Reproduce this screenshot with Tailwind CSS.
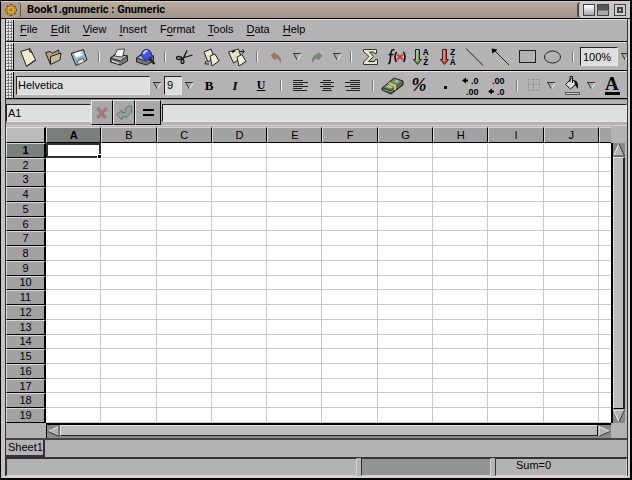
<!DOCTYPE html>
<html lang="en" class="h-full">
  <head>
    <meta charset="UTF-8" />
    <meta name="viewport" content="width=device-width, initial-scale=1.0" />
    <title>Book1.gnumeric : Gnumeric</title>
    <script src="https://cdn.jsdelivr.net/npm/@tailwindcss/browser@4"></script>
  </head>
  <body class="h-full bg-black font-['Liberation_Sans',sans-serif] text-[11px] leading-none text-black">
    <div class="flex h-full flex-col overflow-hidden border border-r-2 border-black border-b-2 bg-[#b4b2b5]">
      <!-- title bar -->
      <header class="flex h-[18px] shrink-0 border-t border-b border-t-[#d8d0c8] border-b-black bg-linear-to-b from-[#b9ada1] to-[#a0948a]">
        <button aria-label="Window menu" class="flex w-5 items-center justify-center rounded-r-sm border-r border-[#5c544c] bg-[#a89c90]">
          <svg class="size-3" viewBox="0 0 12 12" fill="none">
            <path d="M6 0v12M0 6h12M1.800 1.800l8.400 8.400M1.800 10.200l8.400-8.400" stroke="#6b4a10" stroke-width="2.400" />
            <path d="M6 1v10M1 6h10M2.500 2.500l7 7M2.500 9.500l7-7" stroke="#f3a81c" stroke-width="1.400" />
            <circle cx="6" cy="6" r="2.500" fill="#8a7a68" stroke="#f3a81c" stroke-width="1.400" />
          </svg>
        </button>
        <h1 class="flex-1 pt-[2px] pl-[6px] font-['Roboto',sans-serif] text-[11px] font-bold">Book1.gnumeric : Gnumeric</h1>
        <div class="flex items-center rounded-l-sm border-l-2 border-[#4c4844] bg-[#c9c6c8] pr-1 pl-1">
          <button aria-label="Minimize" class="size-3 border border-[#444] bg-linear-to-b from-white from-10% to-[#a8a6a8]"></button>
          <button aria-label="Maximize" class="ml-[2px] size-3 border border-[#444] bg-linear-to-b from-[#555] from-50% to-[#aaa] to-60%"></button>
          <button aria-label="Close" class="ml-[5px] flex size-3 items-center justify-center border border-[#444] bg-[#d0ced0]">
            <span class="size-[6px] border-2 border-[#444] bg-[#ccc]"></span>
          </button>
        </div>
      </header>

      <div class="flex min-h-0 flex-1 flex-col border-2 border-t-0 border-l-4 border-[#d4d2d4] border-l-[#c4c2c4]">
        <div class="flex min-h-0 flex-1 flex-col border-r border-l border-[#333]">
          <!-- menu bar -->
          <nav class="flex h-[23px] shrink-0 border-t border-b border-t-[#e6e4e6] border-b-black">
            <span class="w-[8px] border-r border-r-black bg-[radial-gradient(circle_at_1px_1px,#e6e4e6_1px,transparent_1px),radial-gradient(circle_at_2px_2px,#6c6a6d_1px,#b4b2b5_1px)] bg-size-[3px_3px]"></span>
            <div class="flex items-center gap-[13px] pb-[2px] pl-[6px]">
              <button><u class="underline-offset-2">F</u>ile</button>
              <button><u class="underline-offset-2">E</u>dit</button>
              <button><u class="underline-offset-2">V</u>iew</button>
              <button><u class="underline-offset-2">I</u>nsert</button>
              <button>F<u class="underline-offset-2">o</u>rmat</button>
              <button><u class="underline-offset-2">T</u>ools</button>
              <button><u class="underline-offset-2">D</u>ata</button>
              <button><u class="underline-offset-2">H</u>elp</button>
            </div>
          </nav>

          <!-- standard toolbar -->
          <div class="flex h-[29px] shrink-0 items-center overflow-hidden border-t border-b border-t-[#e6e4e6] border-b-black">
            <span class="h-full w-[8px] shrink-0 border-r border-r-black bg-[radial-gradient(circle_at_1px_1px,#e6e4e6_1px,transparent_1px),radial-gradient(circle_at_2px_2px,#6c6a6d_1px,#b4b2b5_1px)] bg-size-[3px_3px]"></span>
            <button aria-label="New" class="w-[26px] shrink-0">
              <svg class="size-[26px]" viewBox="0 0 26 26">
                <path d="M6.700 7.500 16 4.700l5.500 11-9 6.500z" fill="#eeebd0" stroke="#222" />
                <path d="M12.500 22.500l9.500-6.500M16 4.700l-.5 3 3 1" fill="none" stroke="#222" />
              </svg>
            </button>
            <button aria-label="Open" class="w-[26px] shrink-0">
              <svg class="size-[26px]" viewBox="0 0 26 26" stroke="#222">
                <path d="M5.500 8.500l5-1 1.500 2 6.500-3.500 1 5-9 3.500-.5 5z" fill="#b0a480" />
                <path d="M10.500 12.500l10.500-3.500-1 7-9.500 4.500z" fill="#c8bb98" />
              </svg>
            </button>
            <button aria-label="Save" class="w-[26px] shrink-0">
              <svg class="size-[26px]" viewBox="0 0 26 26" stroke="#222">
                <path d="M5 9.500l12.500-4 3.500 10.500-11 5.500z" fill="#8fb4c4" />
                <path d="M8 9.500l7-2.500 2 4-7 3z" fill="#fff" stroke="none" />
                <path d="M11.500 17l5.500-2.500 1.500 3-6 3z" fill="#dde8ee" stroke-width=".6" />
              </svg>
            </button>
            <span class="flex w-[14px] shrink-0 justify-center"><i class="h-[11px] w-[2px] border-l border-[#777] bg-[#eee]"></i></span>
            <button aria-label="Print" class="w-[26px] shrink-0">
              <svg class="size-[26px]" viewBox="0 0 26 26" stroke="#222">
                <path d="M4.500 14l5-4 12 2v5l-7 4-10-3z" fill="#77787a" />
                <path d="M4.500 14l10 3 7-5-11-2z" fill="#b9b9bb" />
                <path d="M8.500 12l3-6.500 7-.5-2 8z" fill="#fafafa" stroke-width=".8" />
                <path d="M6 17l7 2.500" stroke="#fff" />
              </svg>
            </button>
            <button aria-label="Print preview" class="w-[26px] shrink-0">
              <svg class="size-[26px]" viewBox="0 0 26 26" stroke="#222">
                <path d="M4.500 14l5-4 12 2v5l-7 4-10-3z" fill="#77787a" />
                <path d="M4.500 14l10 3 7-5-11-2z" fill="#b9b9bb" />
                <path d="M17 14l5.500 6" stroke-width="2.500" />
                <circle cx="14.500" cy="10.500" r="5" fill="#3f55e8" stroke="#1a2390" />
                <path d="M11.500 10q1-3 4-3" fill="none" stroke="#c8d4ff" stroke-width="1.800" />
              </svg>
            </button>
            <span class="flex w-[14px] shrink-0 justify-center"><i class="h-[11px] w-[2px] border-l border-[#777] bg-[#eee]"></i></span>
            <button aria-label="Cut" class="w-[26px] shrink-0">
              <svg class="size-[26px]" viewBox="0 0 26 26" fill="none" stroke="#111" stroke-width="1.300">
                <path d="M15 6.500L11 15M20.500 11L9 14.500" />
                <ellipse cx="7" cy="14" rx="2.500" ry="1.500" />
                <ellipse cx="10.500" cy="17.500" rx="1.500" ry="2" />
              </svg>
            </button>
            <button aria-label="Copy" class="w-[26px] shrink-0">
              <svg class="size-[26px]" viewBox="0 0 26 26" fill="#eeebd0" stroke="#222">
                <path d="M6 8l7-3 3 8-6 5z" />
                <path d="M12 12l5-2 4 7-7 5z" />
                <path d="M8 17l-1 3 4 0" fill="none" />
              </svg>
            </button>
            <button aria-label="Paste" class="w-[26px] shrink-0">
              <svg class="size-[26px]" viewBox="0 0 26 26" fill="#e6e2c6" stroke="#222">
                <path d="M4.500 8l10-3 3 9-8 5z" />
                <path d="M13 13l5-2.500 4 7-7 4.500z" fill="#f4f1da" />
                <path d="M8 8l3-1.500" stroke-width="2" />
                <path d="M15 7.500h5M18 5.500l2.500 2-2.500 2" fill="none" />
              </svg>
            </button>
            <span class="flex w-[14px] shrink-0 justify-center"><i class="h-[11px] w-[2px] border-l border-[#777] bg-[#eee]"></i></span>
            <button aria-label="Undo" class="w-[26px] shrink-0">
              <svg class="size-[26px]" viewBox="0 0 26 26">
                <path d="M7 11.500l4-3v2q6 0 5.500 8-1-4.500-5.500-4.500v2z" fill="#a5765f" stroke="#7d6a64" stroke-width=".6" />
              </svg>
            </button>
            <button aria-label="Undo history" class="flex w-[14px] shrink-0 justify-center">
              <svg class="size-[9px]" viewBox="0 0 9 9"><path d="M.5 1h8L4.500 8.500z" fill="#aaa" /><path d="M0 1.500h8.500M.8 1.500l3.700 7" stroke="#333" fill="none" /><path d="M4.500 8.500l3.700-7" stroke="#eee" /></svg>
            </button>
            <button aria-label="Redo" class="w-[26px] shrink-0">
              <svg class="size-[26px]" viewBox="0 0 26 26">
                <path d="M18 11.500l-4-3v2q-6 0-5.500 8 1-4.500 5.500-4.500v2z" fill="#728a72" stroke="#65756a" stroke-width=".6" />
              </svg>
            </button>
            <button aria-label="Redo history" class="flex w-[14px] shrink-0 justify-center">
              <svg class="size-[9px]" viewBox="0 0 9 9"><path d="M.5 1h8L4.500 8.500z" fill="#aaa" /><path d="M0 1.500h8.500M.8 1.500l3.700 7" stroke="#333" fill="none" /><path d="M4.500 8.500l3.700-7" stroke="#eee" /></svg>
            </button>
            <span class="flex w-[14px] shrink-0 justify-center"><i class="h-[11px] w-[2px] border-l border-[#777] bg-[#eee]"></i></span>
            <button aria-label="Sum" class="w-[26px] shrink-0">
              <svg class="size-[26px]" viewBox="0 0 26 26">
                <path d="M5.500 5.500h13v4h-2l-1-1.500h-4l4 4.500-5 5h6l1-2h2v5h-14v-2.500l5.500-5.500-5.500-5z" fill="#e9e5c8" stroke="#333" />
              </svg>
            </button>
            <button aria-label="Function" class="w-[26px] shrink-0">
              <svg class="size-[26px]" viewBox="0 0 26 26" fill="none" stroke="#111">
                <path d="M10.500 6q-3-1-3.500 2.500l-1 9q-.5 2.500-2 2M4.500 10.500h5" stroke-width="1.600" />
                <path d="M12.500 8q-3 5 0 10M19.500 8q3 5 0 10" stroke-width="1.600" />
                <path d="M13.500 10.500l5 5M18.500 10.500l-5 5" stroke="#d0342a" stroke-width="1.800" />
              </svg>
            </button>
            <button aria-label="Sort ascending" class="w-[26px] shrink-0">
              <svg class="size-[26px]" viewBox="0 0 26 26">
                <path d="M5.500 5.500h4v10h2l-4 5-4-5h2z" fill="#6e9a58" stroke="#222" />
                <path d="M7 6v11" stroke="#dfeccf" />
                <text x="13" y="11" class="font-['Liberation_Mono'] text-[9px] font-bold">A</text>
                <text x="13" y="21" class="font-['Liberation_Mono'] text-[9px] font-bold">Z</text>
                <path d="M15 13h2" stroke="#000" />
              </svg>
            </button>
            <button aria-label="Sort descending" class="w-[26px] shrink-0">
              <svg class="size-[26px]" viewBox="0 0 26 26">
                <path d="M6.500 5.500h4v10h2l-4 5-4-5h2z" fill="#d8453a" stroke="#222" />
                <path d="M8 6v11" stroke="#f8c8c0" />
                <text x="14" y="11" class="font-['Liberation_Mono'] text-[9px] font-bold">Z</text>
                <text x="14" y="21" class="font-['Liberation_Mono'] text-[9px] font-bold">A</text>
                <path d="M16 13h2" stroke="#000" />
              </svg>
            </button>
            <button aria-label="Line" class="w-[26px] shrink-0">
              <svg class="size-[26px]" viewBox="0 0 26 26"><path d="M4 4.500l17 17" stroke="#222" /></svg>
            </button>
            <button aria-label="Arrow" class="w-[26px] shrink-0">
              <svg class="size-[26px]" viewBox="0 0 26 26"><path d="M5 5l16 16" stroke="#222" /><path d="M3.500 4.500l6 1-5 4z" /></svg>
            </button>
            <button aria-label="Rectangle" class="w-[26px] shrink-0">
              <svg class="size-[26px]" viewBox="0 0 26 26"><rect x="5.500" y="6.500" width="16" height="12" fill="none" stroke="#222" /></svg>
            </button>
            <button aria-label="Ellipse" class="w-[26px] shrink-0">
              <svg class="size-[26px]" viewBox="0 0 26 26"><ellipse cx="12.500" cy="13" rx="8" ry="6" fill="none" stroke="#222" /></svg>
            </button>
            <span class="flex w-[14px] shrink-0 justify-center"><i class="h-[11px] w-[2px] border-l border-[#777] bg-[#eee]"></i></span>
            <input aria-label="Zoom" value="100%" class="h-[19px] w-[38px] shrink-0 border border-[#e8e6e8] border-t-[#222] border-l-[#222] bg-[#dedede] pl-[2px]" />
            <button aria-label="Zoom levels" class="flex w-[14px] shrink-0 justify-center">
              <svg class="size-[9px]" viewBox="0 0 9 9"><path d="M.5 1h8L4.500 8.500z" fill="#aaa" /><path d="M0 1.500h8.500M.8 1.500l3.700 7" stroke="#333" fill="none" /><path d="M4.500 8.500l3.700-7" stroke="#eee" /></svg>
            </button>
          </div>

          <!-- format toolbar -->
          <div class="flex h-[28px] shrink-0 items-center overflow-hidden border-t border-b border-t-[#e6e4e6] border-b-black">
            <span class="h-full w-[8px] shrink-0 border-r border-r-black bg-[radial-gradient(circle_at_1px_1px,#e6e4e6_1px,transparent_1px),radial-gradient(circle_at_2px_2px,#6c6a6d_1px,#b4b2b5_1px)] bg-size-[3px_3px]"></span>
            <input aria-label="Font" value="Helvetica" class="ml-[2px] h-[19px] w-[134px] shrink-0 border border-[#e8e6e8] border-t-[#222] border-l-[#222] bg-[#dedede] pl-px" />
            <button aria-label="Choose font" class="flex w-[14px] shrink-0 justify-center">
              <svg class="size-[9px]" viewBox="0 0 9 9"><path d="M.5 1h8L4.500 8.500z" fill="#aaa" /><path d="M0 1.500h8.500M.8 1.500l3.700 7" stroke="#333" fill="none" /><path d="M4.500 8.500l3.700-7" stroke="#eee" /></svg>
            </button>
            <input aria-label="Font size" value="9" class="h-[19px] w-[18px] shrink-0 border border-[#e8e6e8] border-t-[#222] border-l-[#222] bg-[#dedede] pl-[2px]" />
            <button aria-label="Choose size" class="flex w-[14px] shrink-0 justify-center">
              <svg class="size-[9px]" viewBox="0 0 9 9"><path d="M.5 1h8L4.500 8.500z" fill="#aaa" /><path d="M0 1.500h8.500M.8 1.500l3.700 7" stroke="#333" fill="none" /><path d="M4.500 8.500l3.700-7" stroke="#eee" /></svg>
            </button>
            <button class="w-[26px] shrink-0 font-['Liberation_Serif',serif] text-[13px] font-bold">B</button>
            <button class="w-[26px] shrink-0 font-['Liberation_Serif',serif] text-[13px] font-bold italic">I</button>
            <button class="w-[26px] shrink-0 font-['Liberation_Serif',serif] text-[12px] font-bold underline">U</button>
            <span class="flex w-[14px] shrink-0 justify-center"><i class="h-[11px] w-[2px] border-l border-[#777] bg-[#eee]"></i></span>
            <button aria-label="Align left" class="w-[26px] shrink-0">
              <svg class="size-[26px]" viewBox="0 0 26 26" stroke="#222" stroke-width="1"><path d="M5 8.500h10M5 10.500h15M5 12.500h10M5 14.500h15M5 16.500h9M5 18.500h14" /></svg>
            </button>
            <button aria-label="Align center" class="w-[26px] shrink-0">
              <svg class="size-[26px]" viewBox="0 0 26 26" stroke="#222" stroke-width="1"><path d="M9 8.500h8M6 10.500h14M9 12.500h8M6 14.500h14M9 16.500h8M8 18.500h10" /></svg>
            </button>
            <button aria-label="Align right" class="w-[26px] shrink-0">
              <svg class="size-[26px]" viewBox="0 0 26 26" stroke="#222" stroke-width="1"><path d="M10 8.500h10M5 10.500h15M10 12.500h10M5 14.500h15M11 16.500h9M6 18.500h14" /></svg>
            </button>
            <span class="flex w-[14px] shrink-0 justify-center"><i class="h-[11px] w-[2px] border-l border-[#777] bg-[#eee]"></i></span>
            <button aria-label="Money" class="w-[26px] shrink-0">
              <svg class="size-[26px]" viewBox="0 0 26 26">
                <path d="M2 16L14 6l9 3v4L11 22l-9-4z" fill="#33452f" stroke="#1c241a" />
                <path d="M3 15.500L14.500 6.500l8 3L11 18z" fill="#6d8766" />
                <path d="M6 15q2-3 5-1t-1 2zM14 9.500q2-2 4-1t-1 2z" fill="#b7c7ac" />
                <path d="M3 17.500l8 2.500 11-8.500" stroke="#8fa688" fill="none" />
                <path d="M8.500 11l6.500 3v4" fill="none" stroke="#e8b85c" stroke-width="2" />
              </svg>
            </button>
            <button class="w-[26px] shrink-0 font-['Liberation_Serif',serif] text-[18px] font-bold italic">%</button>
            <button aria-label="Thousands separator" class="flex w-[26px] shrink-0 justify-center"><i class="mt-1 size-[3px] bg-black"></i></button>
            <button aria-label="Increase decimals" class="w-[26px] shrink-0">
              <svg class="size-[26px]" viewBox="0 0 26 26">
                <path d="M6 8.500h4" stroke="#000" stroke-width="2" /><path d="M4 8.500l4-3v6z" />
                <text x="13" y="12" class="font-['Liberation_Sans'] text-[9px] font-bold">.0</text>
                <text x="8" y="23" class="font-['Liberation_Sans'] text-[9px] font-bold">.00</text>
              </svg>
            </button>
            <button aria-label="Decrease decimals" class="w-[26px] shrink-0">
              <svg class="size-[26px]" viewBox="0 0 26 26">
                <text x="8" y="12" class="font-['Liberation_Sans'] text-[9px] font-bold">.00</text>
                <path d="M6 19.500h4" stroke="#000" stroke-width="2" /><path d="M4 19.500l4-3v6z" />
                <text x="13" y="23" class="font-['Liberation_Sans'] text-[9px] font-bold">.0</text>
              </svg>
            </button>
            <span class="flex w-[14px] shrink-0 justify-center"><i class="h-[11px] w-[2px] border-l border-[#777] bg-[#eee]"></i></span>
            <button aria-label="Borders" class="flex w-5 shrink-0 justify-center">
              <svg class="size-3" viewBox="0 0 12 12" fill="none" stroke="#8c8a8d" stroke-dasharray="1 1"><path d="M0 .5h12M0 5.500h12M0 11.500h12M.5 0v12M5.500 0v12M11.500 0v12" /></svg>
            </button>
            <button aria-label="Choose border" class="flex w-[14px] shrink-0 justify-center">
              <svg class="size-[9px]" viewBox="0 0 9 9"><path d="M.5 1h8L4.500 8.500z" fill="#aaa" /><path d="M0 1.500h8.500M.8 1.500l3.700 7" stroke="#333" fill="none" /><path d="M4.500 8.500l3.700-7" stroke="#eee" /></svg>
            </button>
            <button aria-label="Background" class="w-[26px] shrink-0">
              <svg class="size-[26px]" viewBox="0 0 26 26">
                <path d="M7.500 12.500l6-6 5 5-6 5.500z" fill="#ddd" stroke="#111" />
                <path d="M12 10V4.500h2.500V11" fill="none" stroke="#111" />
                <path d="M16 8q5 1 4 9l-3-4z" fill="#111" />
                <rect x="7.500" y="20.500" width="14" height="2" fill="#ccc" stroke="#555" />
              </svg>
            </button>
            <button aria-label="Choose background" class="flex w-[14px] shrink-0 justify-center">
              <svg class="size-[9px]" viewBox="0 0 9 9"><path d="M.5 1h8L4.500 8.500z" fill="#aaa" /><path d="M0 1.500h8.500M.8 1.500l3.700 7" stroke="#333" fill="none" /><path d="M4.500 8.500l3.700-7" stroke="#eee" /></svg>
            </button>
            <button aria-label="Text color" class="w-[26px] shrink-0">
              <svg class="size-[26px]" viewBox="0 0 26 26">
                <text x="7" y="18" class="font-['Liberation_Serif'] text-[19px] font-bold">A</text>
                <rect x="7" y="20" width="15" height="3" />
              </svg>
            </button>
          </div>

          <!-- cell name and formula -->
          <div class="mb-px flex h-[27px] shrink-0 border-t border-b border-t-[#888] border-b-[#d8d0d4]">
            <input aria-label="Cell" value="A1" class="mt-1 mb-[3px] w-[85px] border border-[#e8e6e8] border-t-[#222] border-l-[#222] bg-[#dedede] pl-px" />
            <button aria-label="Cancel" class="flex w-[22px] items-center justify-center border border-[#e6e4e6] border-r-black border-b-black bg-[#aaa8ab]">
              <svg class="size-[14px]" viewBox="0 0 14 14" fill="none"><path d="M2.500 2l8 10M11.500 2l-9 10" stroke="#777" stroke-width="3" /><path d="M2.500 2l8 10M11.500 2l-9 10" stroke="#bd7676" stroke-width="1.800" /></svg>
            </button>
            <button aria-label="Accept" class="flex w-[22px] items-center justify-center border border-[#e6e4e6] border-r-black border-b-black bg-[#aaa8ab]">
              <svg class="size-4" viewBox="0 0 16 16"><path d="M.5 9.500L6 5v2.500h3L9.500 3l3-2h3v6.500l-5 4.500H6v3z" fill="#93a394" stroke="#69756a" /></svg>
            </button>
            <button aria-label="Enter formula" class="flex w-[26px] flex-col items-center justify-center gap-[3px] border border-[#e6e4e6] border-r-black border-b-black bg-[#aaa8ab]">
              <i class="h-[2px] w-[11px] bg-black"></i>
              <i class="h-[2px] w-[11px] bg-black"></i>
            </button>
            <input aria-label="Formula" class="mt-1 mb-[3px] ml-px min-w-0 flex-1 border border-[#e8e6e8] border-t-[#222] border-l-[#222] bg-[#dedede]" />
          </div>

          <!-- sheet -->
          <div class="flex min-h-0 flex-1 flex-col border-b-2 border-[#444]">
            <div class="flex min-h-0 flex-1">
              <div class="min-w-0 flex-1">
                <table id="sheet" class="h-full w-full table-fixed border-separate border-spacing-0 bg-white text-[11px]">
                  <thead>
                    <tr class="h-4 bg-[#a3a1a4]">
                      <th class="w-[40px] border border-[#e6e4e6] border-r-2 border-r-black border-b-black bg-[#bcbabd]"></th>
                    </tr>
                  </thead>
                  <tbody></tbody>
                </table>
              </div>
              <div class="flex w-4 shrink-0 flex-col pt-4 pr-[2px]">
                <div class="flex flex-1 flex-col border-l-2 border-black bg-[#8a888b]">
                  <button aria-label="Scroll up"><svg class="h-[14px] w-3" viewBox="0 0 12 14"><path d="M6 1L.5 13h11z" fill="#b4b2b5" stroke="#eee" /><path d="M6 1l5.500 12H0" fill="none" stroke="#222" /></svg></button>
                  <div class="flex-1 border border-r-2 border-[#e6e4e6] border-r-[#222] border-b-black bg-[#bcbcbc]"></div>
                  <button aria-label="Scroll down"><svg class="h-[14px] w-3" viewBox="0 0 12 14"><path d="M.5 1h11L6 13z" fill="#b4b2b5" stroke="#eee" /><path d="M11.500 1L6 13" fill="none" stroke="#222" /></svg></button>
                </div>
              </div>
            </div>
            <div class="flex h-[15px] shrink-0 pr-4 pl-[40px]">
              <div class="flex flex-1 border-t-2 border-l border-black bg-[#8a888b]">
                <button aria-label="Scroll left"><svg class="h-[11px] w-[13px]" viewBox="0 0 13 11"><path d="M1 5.500L12 .5v10z" fill="#b4b2b5" stroke="#eee" /><path d="M1 5.500l11 5V0" fill="none" stroke="#222" /></svg></button>
                <div class="h-[11px] flex-1 border border-[#e6e4e6] border-r-black border-b-[#222] bg-[#bcbcbc]"></div>
                <button aria-label="Scroll right"><svg class="h-[11px] w-[13px]" viewBox="0 0 13 11"><path d="M1 .5v10l11-5z" fill="#b4b2b5" stroke="#eee" /><path d="M1 10.500l11-5" fill="none" stroke="#222" /></svg></button>
              </div>
            </div>
          </div>
          <div class="flex h-[18px] shrink-0 border-b border-[#333]">
            <button class="w-[39px] border-r-2 border-b-2 border-[#333] pl-[2px] text-left">Sheet1</button>
          </div>

          <!-- status bar -->
          <footer class="flex h-[18px] shrink-0 gap-1">
            <div class="flex-1 border border-[#d8d0d4] border-t-[#333] border-l-[#333]"></div>
            <div class="w-[130px] border border-[#d8d0d4] border-t-[#333] border-l-[#333] bg-[#949295]"></div>
            <div class="w-[132px] border border-[#d8d0d4] border-t-[#333] border-l-[#333] pt-px pl-5">Sum=0</div>
          </footer>
        </div>
      </div>
    </div>

    <script>
      const head = document.querySelector("#sheet thead tr");
      const body = document.querySelector("#sheet tbody");
      const cols = ["A", "B", "C", "D", "E", "F", "G", "H", "I", "J", ""];

      cols.forEach((name, i) => {
        const th = document.createElement("th");
        th.textContent = name;
        th.className =
          "border border-[#d8d6d8] border-r-black border-b-black p-0 " +
          (i === 0 ? "bg-[#7b7f7c] font-bold " : "font-normal ") +
          (name ? "" : "w-[12px] border-r-0");
        head.appendChild(th);
      });

      for (let r = 1; r <= 19; r++) {
        const tr = document.createElement("tr");
        const th = document.createElement("th");
        th.textContent = r;
        th.className =
          "border border-[#d8d6d8] border-r-2 border-r-black border-b-black p-0 " +
          (r === 1 ? "bg-[#7b7f7c] font-bold" : "bg-[#a3a1a4] font-normal");
        tr.appendChild(th);
        cols.forEach((name, i) => {
          const td = document.createElement("td");
          td.className =
            "border-b border-[#c8c8c8] p-0 " + (name ? "border-r" : "");
          if (r === 1 && i === 0) {
            // active cell with its fill handle
            td.className = "relative border-2 border-[#333] p-0";
            td.innerHTML =
              '<span class="absolute -right-[3px] -bottom-[3px] size-[5px] border border-white bg-black"></span>';
          }
          tr.appendChild(td);
        });
        body.appendChild(tr);
      }
    </script>
  </body>
</html>
